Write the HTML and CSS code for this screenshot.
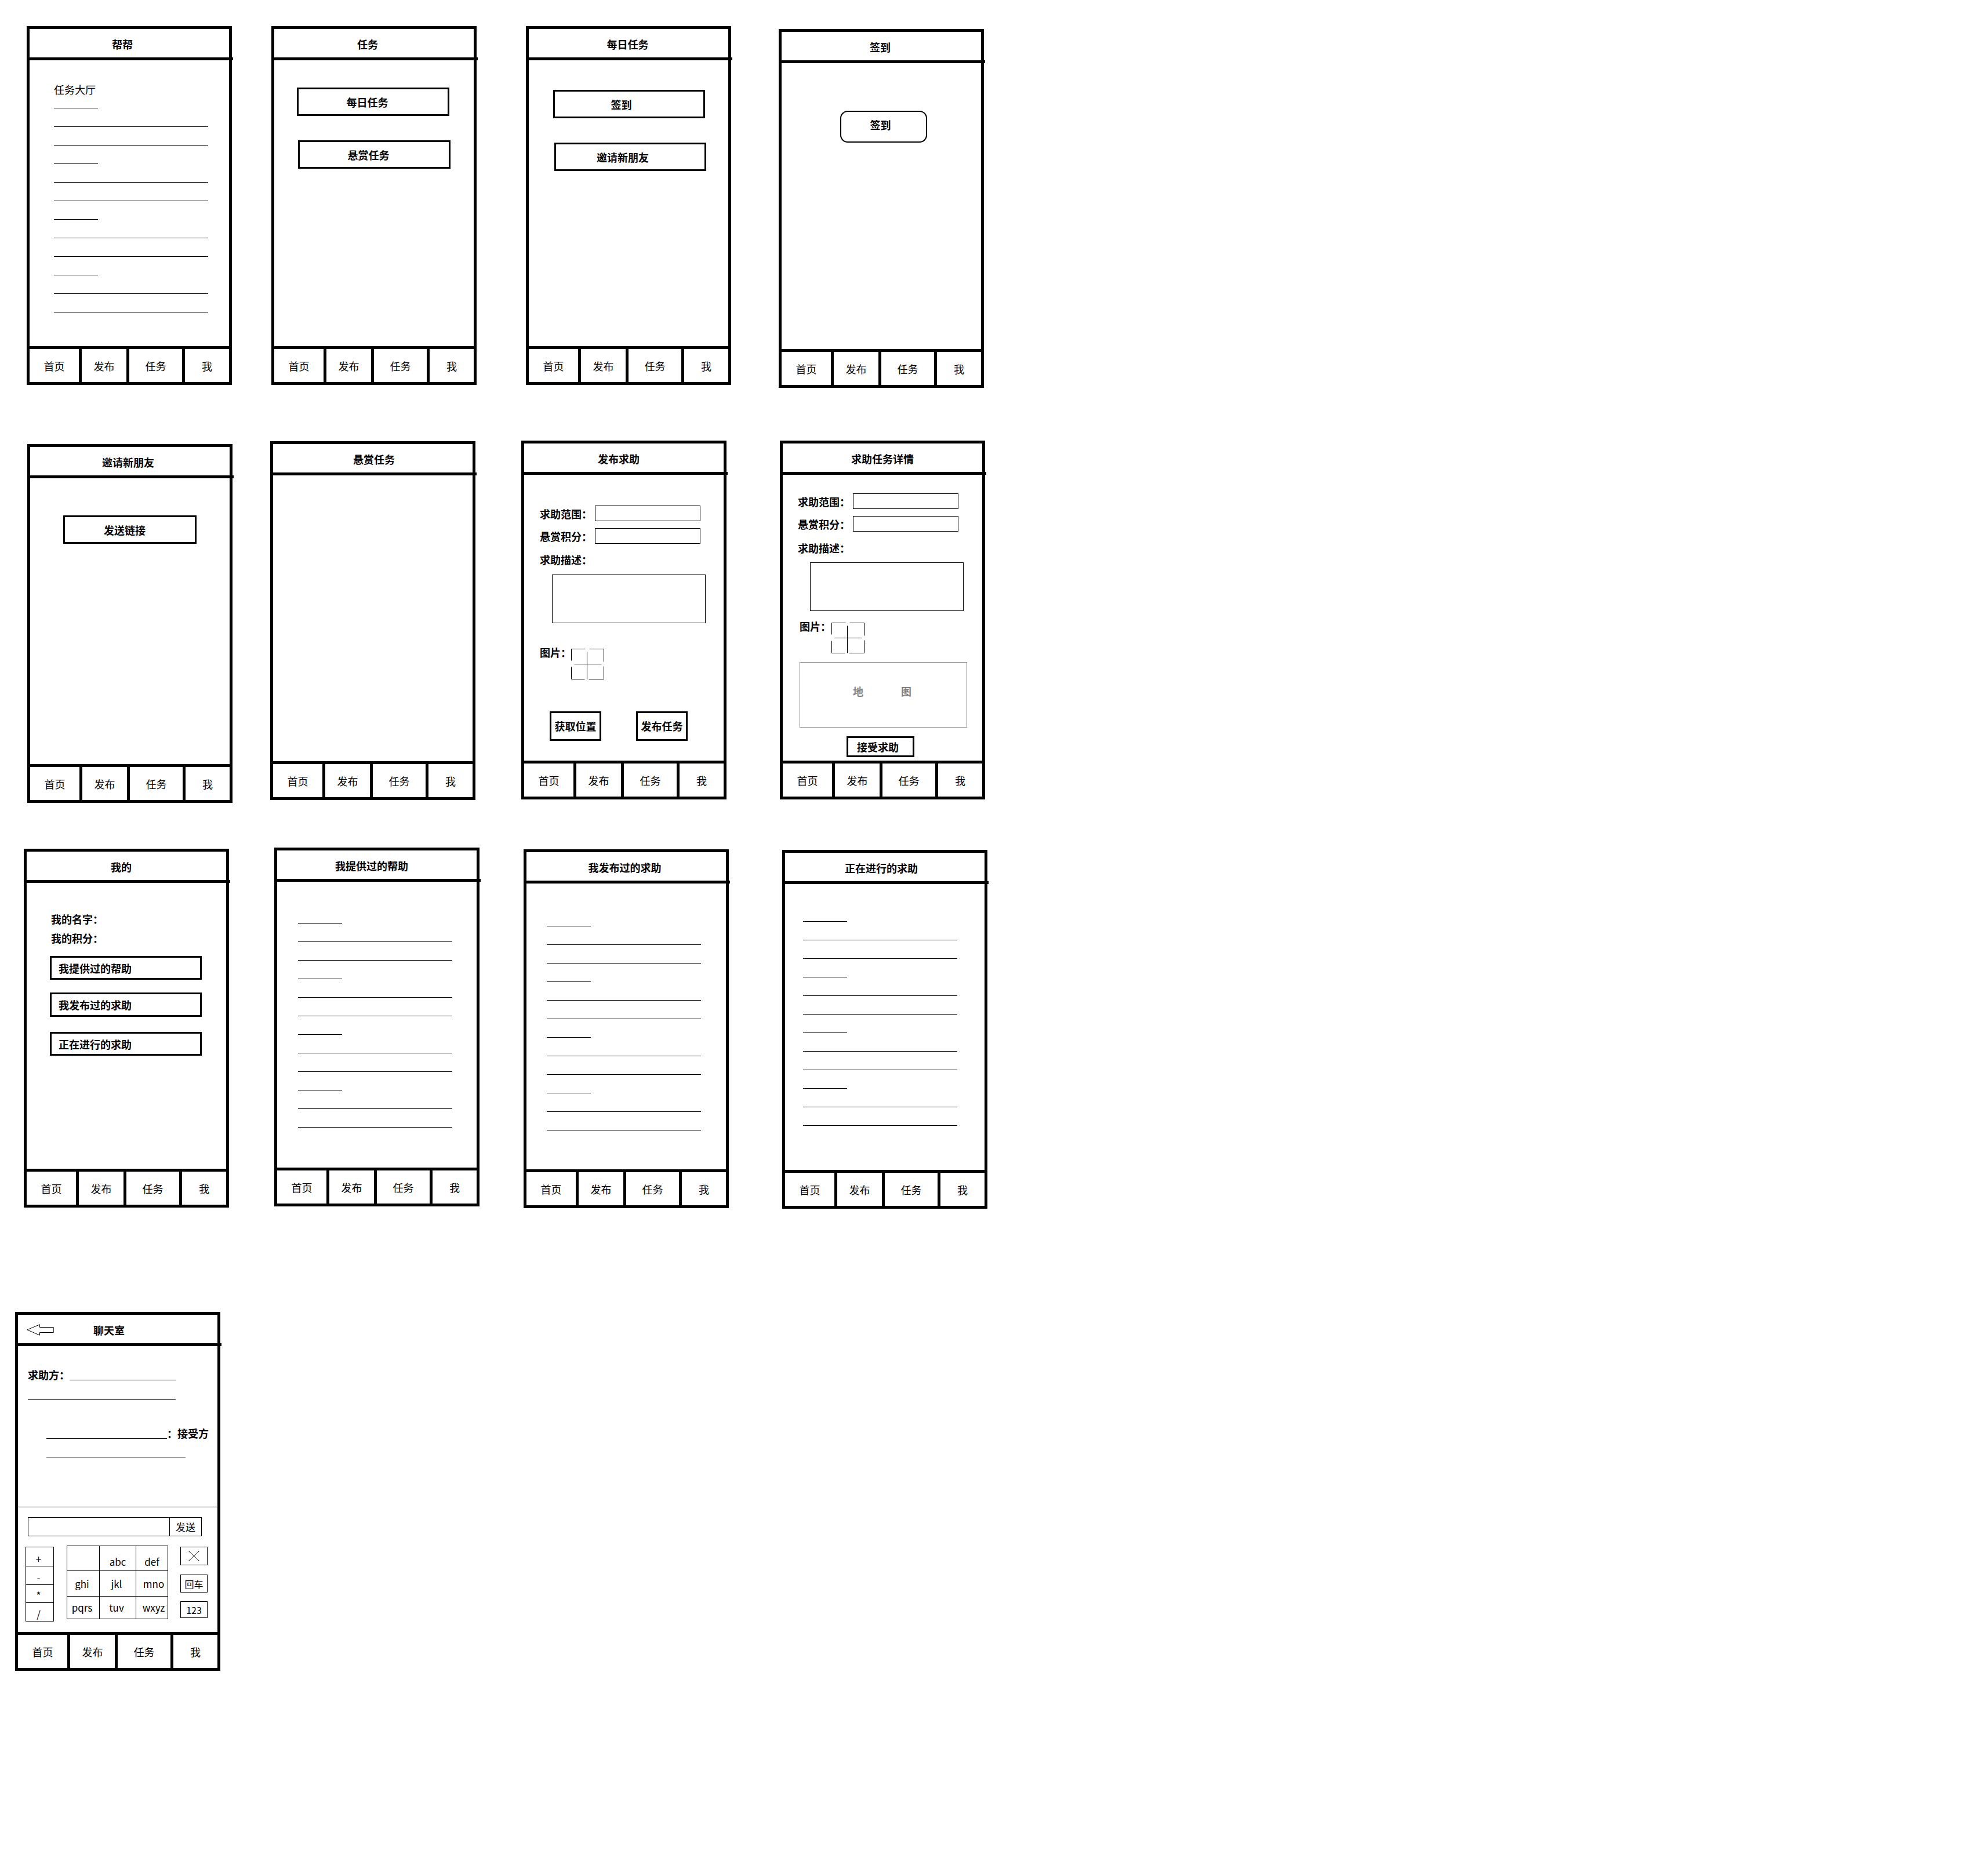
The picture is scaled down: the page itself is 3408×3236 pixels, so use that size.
FILE: index.html
```html
<!DOCTYPE html>
<html lang="zh-CN">
<head>
<meta charset="utf-8">
<title>帮帮 原型</title>
<link rel="stylesheet" href="styles.css">
</head>
<body>
<div class="canvas">

  <!-- 1 帮帮 -->
  <section class="phone f1">
    <header class="hdr pr24"><span class="ttl">帮帮</span></header>
    <div class="main m-f1">
      <p class="txt">任务大厅</p>
      <div class="lines mt20">
        <i class="ln s"></i><i class="ln"></i><i class="ln"></i>
        <i class="ln s"></i><i class="ln"></i><i class="ln"></i>
        <i class="ln s"></i><i class="ln"></i><i class="ln"></i>
        <i class="ln s"></i><i class="ln"></i><i class="ln"></i>
      </div>
    </div>
    <nav class="nav"><span>首页</span><span>发布</span><span>任务</span><span>我</span></nav>
  </section>

  <!-- 2 任务 -->
  <section class="phone f2">
    <header class="hdr pr22"><span class="ttl">任务</span></header>
    <div class="main m-f2">
      <div class="btn bw263 ml39">每日任务</div>
      <div class="btn bw263 ml41 mt42">悬赏任务</div>
    </div>
    <nav class="nav"><span>首页</span><span>发布</span><span>任务</span><span>我</span></nav>
  </section>

  <!-- 3 每日任务 -->
  <section class="phone f3">
    <header class="hdr pr3"><span class="ttl">每日任务</span></header>
    <div class="main m-f3">
      <div class="btn bw262 ml42 txl27">签到</div>
      <div class="btn bw262 ml44 mt42 txl26">邀请新朋友</div>
    </div>
    <nav class="nav"><span>首页</span><span>发布</span><span>任务</span><span>我</span></nav>
  </section>

  <!-- 4 签到 -->
  <section class="phone f4">
    <header class="hdr pr4"><span class="ttl">签到</span></header>
    <div class="main m-f4">
      <div class="btn-round">签到</div>
    </div>
    <nav class="nav"><span>首页</span><span>发布</span><span>任务</span><span>我</span></nav>
  </section>

  <!-- 5 邀请新朋友 -->
  <section class="phone f5">
    <header class="hdr pr6"><span class="ttl">邀请新朋友</span></header>
    <div class="main m-f5">
      <div class="btn bw230 ml57 txl18">发送链接</div>
    </div>
    <nav class="nav"><span>首页</span><span>发布</span><span>任务</span><span>我</span></nav>
  </section>

  <!-- 6 悬赏任务 -->
  <section class="phone f6">
    <header class="hdr pl4"><span class="ttl">悬赏任务</span></header>
    <div class="main"></div>
    <nav class="nav"><span>首页</span><span>发布</span><span>任务</span><span>我</span></nav>
  </section>

  <!-- 7 发布求助 -->
  <section class="phone f7">
    <header class="hdr pr18"><span class="ttl">发布求助</span></header>
    <div class="main m-f7">
      <div class="frow"><span class="lbl">求助范围：</span><span class="inp"></span></div>
      <div class="frow mt12"><span class="lbl">悬赏积分：</span><span class="inp"></span></div>
      <p class="lbl-blk mt15">求助描述：</p>
      <div class="tarea mt14"></div>
      <div class="imgrow mt38">
        <span class="lbl-b">图片：</span>
        <svg class="imgico" width="57" height="53" viewBox="0 0 57 53" fill="none" stroke="#000" stroke-width="1"><path d="M0.5 0.5H24.5M31.5 0.5H56.5M0.5 0.5V20.5M0.5 31.5V52.5M56.5 0.5V22.5M56.5 30.5V52.5M0.5 52.5H23.5M30.5 52.5H56.5M27.5 5.5V52.5M5.5 26.5H52.5"/></svg>
      </div>
      <div class="btnrow">
        <div class="btn sq">获取位置</div>
        <div class="btn sq ml60">发布任务</div>
      </div>
    </div>
    <nav class="nav"><span>首页</span><span>发布</span><span>任务</span><span>我</span></nav>
  </section>

  <!-- 8 求助任务详情 -->
  <section class="phone f8">
    <header class="hdr"><span class="ttl">求助任务详情</span></header>
    <div class="main m-f8">
      <div class="frow"><span class="lbl">求助范围：</span><span class="inp"></span></div>
      <div class="frow mt12"><span class="lbl">悬赏积分：</span><span class="inp"></span></div>
      <p class="lbl-blk mt16">求助描述：</p>
      <div class="tarea mt13"></div>
      <div class="imgrow mt14 ml3">
        <span class="lbl-b">图片：</span>
        <svg class="imgico ml1" width="57" height="53" viewBox="0 0 57 53" fill="none" stroke="#000" stroke-width="1"><path d="M0.5 0.5H24.5M31.5 0.5H56.5M0.5 0.5V20.5M0.5 31.5V52.5M56.5 0.5V22.5M56.5 30.5V52.5M0.5 52.5H23.5M30.5 52.5H56.5M27.5 5.5V52.5M5.5 26.5H52.5"/></svg>
      </div>
      <div class="map"><span>地</span><span>图</span></div>
      <div class="btn accept">接受求助</div>
    </div>
    <nav class="nav"><span>首页</span><span>发布</span><span>任务</span><span>我</span></nav>
  </section>

  <!-- 9 我的 -->
  <section class="phone f9">
    <header class="hdr pr18"><span class="ttl">我的</span></header>
    <div class="main m-f9">
      <p class="lbl-blk">我的名字：</p>
      <p class="lbl-blk mt9">我的积分：</p>
      <div class="btn mine mt19">我提供过的帮助</div>
      <div class="btn mine h42 mt22">我发布过的求助</div>
      <div class="btn mine mt26">正在进行的求助</div>
    </div>
    <nav class="nav"><span>首页</span><span>发布</span><span>任务</span><span>我</span></nav>
  </section>

  <!-- 10 我提供过的帮助 -->
  <section class="phone f10">
    <header class="hdr pr18"><span class="ttl">我提供过的帮助</span></header>
    <div class="main m-f10">
      <div class="lines">
        <i class="ln s"></i><i class="ln"></i><i class="ln"></i>
        <i class="ln s"></i><i class="ln"></i><i class="ln"></i>
        <i class="ln s"></i><i class="ln"></i><i class="ln"></i>
        <i class="ln s"></i><i class="ln"></i><i class="ln"></i>
      </div>
    </div>
    <nav class="nav"><span>首页</span><span>发布</span><span>任务</span><span>我</span></nav>
  </section>

  <!-- 11 我发布过的求助 -->
  <section class="phone f11">
    <header class="hdr pr5"><span class="ttl">我发布过的求助</span></header>
    <div class="main m-f11">
      <div class="lines">
        <i class="ln s"></i><i class="ln"></i><i class="ln"></i>
        <i class="ln s"></i><i class="ln"></i><i class="ln"></i>
        <i class="ln s"></i><i class="ln"></i><i class="ln"></i>
        <i class="ln s"></i><i class="ln"></i><i class="ln"></i>
      </div>
    </div>
    <nav class="nav"><span>首页</span><span>发布</span><span>任务</span><span>我</span></nav>
  </section>

  <!-- 12 正在进行的求助 -->
  <section class="phone f12">
    <header class="hdr pr12"><span class="ttl">正在进行的求助</span></header>
    <div class="main m-f12">
      <div class="lines">
        <i class="ln s"></i><i class="ln"></i><i class="ln"></i>
        <i class="ln s"></i><i class="ln"></i><i class="ln"></i>
        <i class="ln s"></i><i class="ln"></i><i class="ln"></i>
        <i class="ln s"></i><i class="ln"></i><i class="ln"></i>
      </div>
    </div>
    <nav class="nav"><span>首页</span><span>发布</span><span>任务</span><span>我</span></nav>
  </section>

  <!-- 13 聊天室 -->
  <section class="phone f13">
    <header class="hdr chat-hdr">
      <svg class="back" width="47" height="20" viewBox="0 0 47 20"><path d="M0.8 9.8L22.5 0.8V5.5H46.2V14.5H22.5V19.2Z" fill="none" stroke="#000" stroke-width="1"/></svg>
      <span class="ttl chat-ttl">聊天室</span>
    </header>
    <div class="main chat-main">
      <div class="msgs">
        <div class="mrow"><span class="lbl-b">求助方：</span><i class="uline w184"></i></div>
        <i class="ln w255 mt31"></i>
        <div class="mrow mt45 ml32"><i class="uline w208"></i><span class="lbl-b">：接受方</span></div>
        <i class="ln w240 mt29 ml32"></i>
      </div>
      <div class="composer">
        <div class="inputbar"><span class="field"></span><span class="send">发送</span></div>
        <div class="keypad">
          <div class="ops"><span>+</span><span>-</span><span>*</span><span>/</span></div>
          <div class="keys">
            <span class="r1"></span><span class="r1">abc</span><span class="r1">def</span>
            <span class="sl">ghi</span><span class="sl">jkl</span><span class="sr">mno</span>
            <span class="sl">pqrs</span><span class="sl">tuv</span><span class="sr">wxyz</span>
          </div>
          <div class="side">
            <span class="sbox del"><svg width="21" height="20" viewBox="0 0 21 20"><path d="M1 1L20 19M20 1L1 19" stroke="#000" stroke-width="1" fill="none"/></svg></span>
            <span class="sbox enter">回车</span>
            <span class="sbox num">123</span>
          </div>
        </div>
      </div>
    </div>
    <nav class="nav"><span>首页</span><span>发布</span><span>任务</span><span>我</span></nav>
  </section>

</div>
</body>
</html>
```

FILE: styles.css
```css
* { box-sizing: border-box; margin: 0; padding: 0; }

body {
  margin: 0;
  background: #fff;
  color: #000;
  font-family: "Noto Sans CJK SC", "Noto Sans", sans-serif;
  font-size: 18px;
  line-height: 24px;
}

i { display: block; font-style: normal; }

.canvas { position: relative; width: 3408px; height: 3236px; background: #fff; }

/* ---------- phone frame ---------- */
.phone {
  position: absolute;
  width: 354px;
  height: 619px;
  border: 5px solid #000;
  display: flex;
  flex-direction: column;
  background: #fff;
}
.phone::after {
  content: "";
  position: absolute;
  right: -7px;
  top: 49px;
  width: 2px;
  height: 5px;
  background: #000;
}

.f1  { left: 46px;   top: 45px; }
.f2  { left: 468px;  top: 45px; }
.f3  { left: 907px;  top: 45px; }
.f4  { left: 1343px; top: 50px; }
.f5  { left: 47px;   top: 766px; }
.f6  { left: 466px;  top: 761px; }
.f7  { left: 899px;  top: 760px; }
.f8  { left: 1345px; top: 760px; }
.f9  { left: 41px;   top: 1464px; }
.f10 { left: 473px;  top: 1462px; }
.f11 { left: 903px;  top: 1465px; }
.f12 { left: 1349px; top: 1466px; }
.f13 { left: 26px;   top: 2263px; }

.hdr {
  flex: none;
  height: 54px;
  border-bottom: 5px solid #000;
  display: flex;
  align-items: center;
  justify-content: center;
  padding-top: 3px;
}
.ttl { font-weight: 700; font-size: 18px; }
.pr24 { padding-right: 24px; }
.pr22 { padding-right: 22px; }
.pr18 { padding-right: 18px; }
.pr12 { padding-right: 12px; }
.pr6  { padding-right: 6px; }
.pr5  { padding-right: 5px; }
.pr4  { padding-right: 4px; }
.pr3  { padding-right: 3px; }
.pl4  { padding-left: 4px; }

.main { flex: 1; min-height: 0; }

.nav {
  flex: none;
  height: 62px;
  border-top: 5px solid #000;
  display: grid;
  grid-template-columns: 85px 82px 96px 1fr;
}
.nav span {
  display: flex;
  align-items: center;
  justify-content: center;
  font-size: 18px;
}
.nav span + span { border-left: 5px solid #000; }

/* ---------- shared pieces ---------- */
.txt { font-size: 18px; line-height: 24px; }

.lines { display: flex; flex-direction: column; gap: 31px; }
.ln { height: 1px; background: #000; width: 266px; }
.ln.s { width: 76px; }

.btn {
  border: 3px solid #000;
  font-weight: 700;
  display: flex;
  align-items: center;
  justify-content: center;
  height: 49px;
}
.bw263 { width: 263px; padding-right: 20px; }
.bw262 { width: 262px; }
.bw230 { width: 230px; }
.txl27 { padding-right: 27px; }
.txl26 { padding-right: 26px; }
.txl18 { padding-right: 18px; }

.ml1 { margin-left: 1px; }
.ml3 { margin-left: 3px; }
.ml32 { margin-left: 32px; }
.ml39 { margin-left: 39px; }
.ml41 { margin-left: 41px; }
.ml42 { margin-left: 42px; }
.ml44 { margin-left: 44px; }
.ml57 { margin-left: 57px; }
.ml60 { margin-left: 60px; }
.mt9  { margin-top: 9px; }
.mt12 { margin-top: 12px; }
.mt13 { margin-top: 13px; }
.mt14 { margin-top: 14px; }
.mt15 { margin-top: 15px; }
.mt16 { margin-top: 16px; }
.mt19 { margin-top: 19px; }
.mt20 { margin-top: 20px; }
.mt22 { margin-top: 22px; }
.mt26 { margin-top: 26px; }
.mt29 { margin-top: 29px; }
.mt31 { margin-top: 31px; }
.mt38 { margin-top: 38px; }
.mt42 { margin-top: 42px; }
.mt45 { margin-top: 45px; }

/* ---------- per-screen bodies ---------- */
.m-f1  { padding: 38px 0 0 42px; }
.m-f2  { padding-top: 47px; }
.m-f3  { padding-top: 51px; }
.m-f4  { padding: 82px 0 0 101px; }
.m-f5  { padding-top: 64px; }
.m-f7  { padding: 53px 0 0 27px; }
.m-f8  { padding: 32px 0 0 26px; }
.m-f9  { padding: 50px 0 0 42px; }
.m-f10 { padding: 71px 0 0 36px; }
.m-f11 { padding: 73px 0 0 35px; }
.m-f12 { padding: 64px 0 0 31px; }

.btn-round {
  width: 150px;
  height: 55px;
  border: 2px solid #000;
  border-radius: 13px;
  font-weight: 700;
  text-align: center;
  padding: 10px 11px 0 0;
}

/* form */
.frow { display: flex; align-items: center; height: 27px; }
.lbl { width: 95px; font-weight: 700; flex: none; }
.lbl-blk { font-weight: 700; line-height: 24px; }
.lbl-b { font-weight: 700; line-height: 24px; flex: none; }
.inp { width: 182px; height: 27px; border: 1px solid #000; }
.tarea { width: 265px; height: 84px; border: 1px solid #000; margin-left: 21px; }
.imgrow { display: flex; align-items: flex-start; }
.imgico { display: block; margin-top: 6px; flex: none; }
.btnrow { display: flex; margin-top: 55px; padding-left: 17px; }
.btn.sq { width: 89px; height: 51px; padding-bottom: 2px; }

.map {
  margin: 15px 0 0 3px;
  width: 289px;
  height: 113px;
  border: 1px solid #8a8a8a;
  display: flex;
  justify-content: center;
  gap: 65px;
  padding: 37px 4px 0 0;
  color: #808080;
  font-weight: 700;
}
.btn.accept {
  width: 117px;
  height: 36px;
  margin: 15px 0 0 84px;
  padding-right: 9px;
}

.btn.mine {
  width: 262px;
  height: 41px;
  margin-left: -2px;
  justify-content: flex-start;
  padding-left: 12px;
}
.btn.mine.h42 { height: 42px; }

/* ---------- chat ---------- */
.chat-hdr { justify-content: flex-start; padding-left: 15px; }
.back { display: block; flex: none; }
.chat-ttl { margin-left: 68px; }

.chat-main { display: flex; flex-direction: column; }
.msgs { height: 277px; flex: none; padding: 37px 0 0 17px; }
.mrow { display: flex; align-items: flex-end; }
.uline { height: 1px; background: #000; margin-bottom: 2px; }
.w184 { width: 184px; }
.w208 { width: 208px; }
.w240 { width: 240px; }
.w255 { width: 255px; }

.composer { flex: 1; border-top: 1px solid #000; padding: 17px 0 0 13px; }
.inputbar {
  display: flex;
  margin-left: 4px;
  width: 300px;
  height: 33px;
  border: 1px solid #000;
}
.inputbar .field { flex: 1; }
.inputbar .send {
  width: 55px;
  border-left: 1px solid #000;
  display: flex;
  align-items: center;
  justify-content: center;
  font-size: 17px;
}

.keypad { display: flex; align-items: flex-start; margin-top: 16px; }
.ops {
  width: 49px;
  height: 129px;
  margin-top: 2px;
  border: 1px solid #000;
  display: grid;
  grid-template-rows: repeat(4, 1fr);
}
.ops span {
  display: flex;
  justify-content: center;
  align-items: flex-end;
  font-size: 17px;
  line-height: 24px;
  padding-right: 4px;
}
.ops span + span { border-top: 1px solid #000; }

.keys {
  margin-left: 22px;
  width: 175px;
  height: 127px;
  border: 1px solid #000;
  background: #000;
  display: grid;
  grid-template-columns: 55px 62px 1fr;
  grid-template-rows: 42px 43px 1fr;
  gap: 1px;
}
.keys span {
  background: #fff;
  display: flex;
  align-items: center;
  justify-content: center;
  font-size: 17px;
}
.keys span.r1 { padding-top: 12px; }
.keys span.sl { padding-right: 4px; }
.keys span.sr { padding-left: 6px; }

.side { margin-left: 21px; width: 47px; display: flex; flex-direction: column; }
.sbox {
  border: 1px solid #000;
  display: flex;
  align-items: center;
  justify-content: center;
  font-size: 16px;
}
.sbox.del { height: 32px; margin-top: 2px; }
.sbox.del svg { display: block; }
.sbox.enter { height: 31px; margin-top: 16px; }
.sbox.num { height: 29px; margin-top: 15px; }
```
